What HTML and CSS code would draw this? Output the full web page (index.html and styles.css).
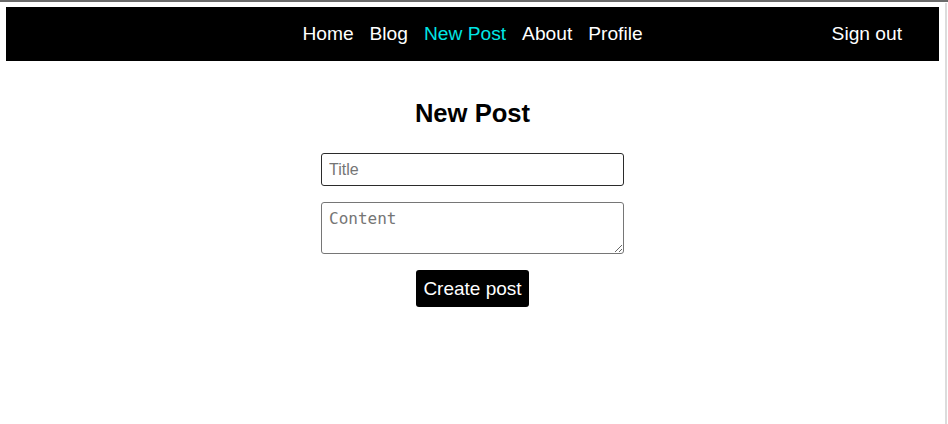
FILE: index.html
```html
<!DOCTYPE html>
<html lang="en">
<head>
<meta charset="utf-8">
<title>New Post</title>
<link rel="stylesheet" href="styles.css">
</head>
<body>
<div class="frame">
  <div class="content">
    <nav class="nav">
      <div class="nav-spacer"></div>
      <div class="nav-links">
        <a href="#" class="nav-link">Home</a>
        <a href="#" class="nav-link">Blog</a>
        <a href="#" class="nav-link active">New Post</a>
        <a href="#" class="nav-link">About</a>
        <a href="#" class="nav-link">Profile</a>
      </div>
      <div class="nav-right">
        <a href="#" class="nav-link">Sign out</a>
      </div>
    </nav>
    <main class="main">
      <h2 class="title">New Post</h2>
      <form class="form">
        <input class="field field-title" type="text" placeholder="Title">
        <textarea class="field field-content" placeholder="Content"></textarea>
        <button class="btn" type="button">Create post</button>
      </form>
    </main>
  </div>
  <div class="edge"></div>
</div>
</body>
</html>
```
FILE: styles.css
```css
html, body {
  margin: 0;
  padding: 0;
  background: #fff;
}
body {
  width: 948px;
  height: 424px;
  overflow: hidden;
  font-family: "Liberation Sans", Arial, sans-serif;
}
.frame {
  display: flex;
  border-top: 2px solid #6b6b6b;
  height: 422px;
}
.content {
  flex: 1;
  padding: 5px 6px 0 6px;
}
.edge {
  width: 2px;
  background: #dcdcdc;
  margin: 1px 1px 0 0;
}
.nav {
  height: 54px;
  background: #000;
  display: grid;
  grid-template-columns: 1fr auto 1fr;
  align-items: center;
}
.nav-links {
  display: flex;
  gap: 16px;
}
.nav-right {
  display: flex;
  justify-content: flex-end;
  padding-right: 37px;
}
.nav-link {
  color: #fff;
  text-decoration: none;
  font-size: 19.2px;
  line-height: 22px;
}
.nav-link.active {
  color: #00e5e5;
}
.main {
  display: flex;
  flex-direction: column;
  align-items: center;
}
.title {
  margin: 38px 0 25px 0;
  font-size: 25.6px;
  font-weight: bold;
  line-height: 29px;
}
.form {
  display: flex;
  flex-direction: column;
  align-items: center;
  gap: 16px;
}
.field {
  box-sizing: border-box;
  width: 303px;
  border-radius: 3px;
  font-size: 16px;
  padding: 0 7px;
  margin: 0;
  color: #000;
}
.field-title {
  height: 33px;
  border: 1px solid #2b2b2b;
  font-family: "Liberation Sans", Arial, sans-serif;
}
.field-content {
  height: 52px;
  border: 1px solid #767676;
  padding-top: 6px;
  font-family: "DejaVu Sans Mono", monospace;
  display: block;
}
.field::placeholder {
  color: #757575;
}
.btn {
  background: #000;
  color: #fff;
  border: none;
  border-radius: 3px;
  font-family: "Liberation Sans", Arial, sans-serif;
  font-size: 19px;
  line-height: 22px;
  height: 37px;
  padding: 0 7px;
  cursor: pointer;
}
```
